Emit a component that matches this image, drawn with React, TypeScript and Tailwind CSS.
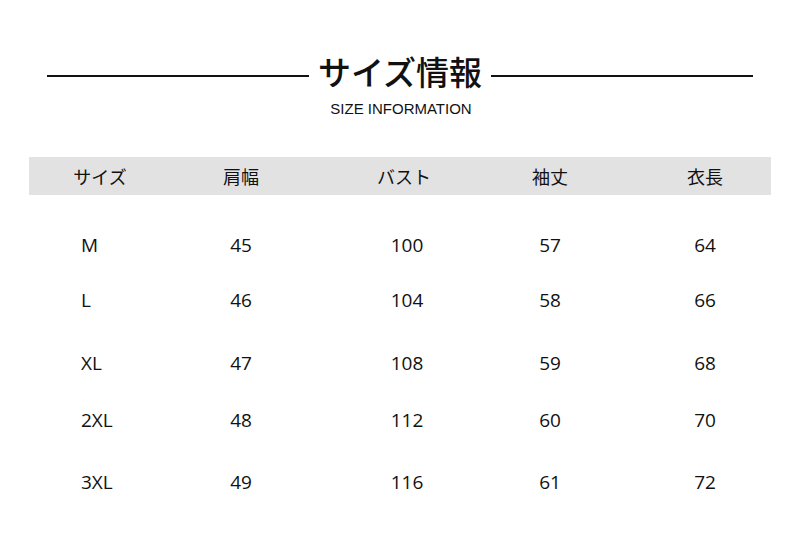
const headers = ["サイズ", "肩幅", "バスト", "袖丈", "衣長"];

const rows = [
  { size: "M", h: "h-[54px]", vals: ["45", "100", "57", "64"] },
  { size: "L", h: "h-[56px]", vals: ["46", "104", "58", "66"] },
  { size: "XL", h: "h-[70px]", vals: ["47", "108", "59", "68"] },
  { size: "2XL", h: "h-[44px]", vals: ["48", "112", "60", "70"] },
  { size: "3XL", h: "h-[80px]", vals: ["49", "116", "61", "72"] },
];

const cols = "grid grid-cols-[142px_140px_186px_106px_1fr]";

export default function App() {
  return (
    <div className="w-[800px] h-[543px] bg-white text-[#111] overflow-hidden">
      {/* title */}
      <div className="flex items-center pt-[50px] px-[47px]">
        <div className="flex-1 h-[2px] bg-[#111] mt-[10px]" />
        <h1
          className="mx-[9px] text-[33px] leading-[42px] font-medium"
          style={{ fontFamily: '"Noto Sans CJK JP", sans-serif' }}
        >
          サイズ情報
        </h1>
        <div className="flex-1 h-[2px] bg-[#111] mt-[10px]" />
      </div>
      <p
        className="text-center text-[15px] leading-[18px] text-[#111] mt-[8px] pl-[2px]"
        style={{ fontFamily: '"Liberation Sans", Arial, sans-serif' }}
      >
        SIZE INFORMATION
      </p>

      {/* table */}
      <div className="px-[29px] mt-[39px]">
        <div
          className={`${cols} h-[38px] items-center bg-[#e2e2e2] text-[18px]`}
          style={{ fontFamily: '"Noto Sans CJK JP", sans-serif' }}
        >
          {headers.map((t, i) => (
            <div key={t} className={i === 4 ? "text-center pl-[36px]" : "text-center"}>
              {t}
            </div>
          ))}
        </div>

        <div className="mt-[23px]" style={{ fontFamily: '"Open Sans", sans-serif' }}>
          {rows.map((r) => (
            <div key={r.size} className={`${cols} ${r.h} items-center text-[19px]`}>
              <div className="pl-[52px]">{r.size}</div>
              <div className="text-center">{r.vals[0]}</div>
              <div className="text-center pl-[6px]">{r.vals[1]}</div>
              <div className="text-center">{r.vals[2]}</div>
              <div className="text-center pl-[36px]">{r.vals[3]}</div>
            </div>
          ))}
        </div>
      </div>
    </div>
  );
}
